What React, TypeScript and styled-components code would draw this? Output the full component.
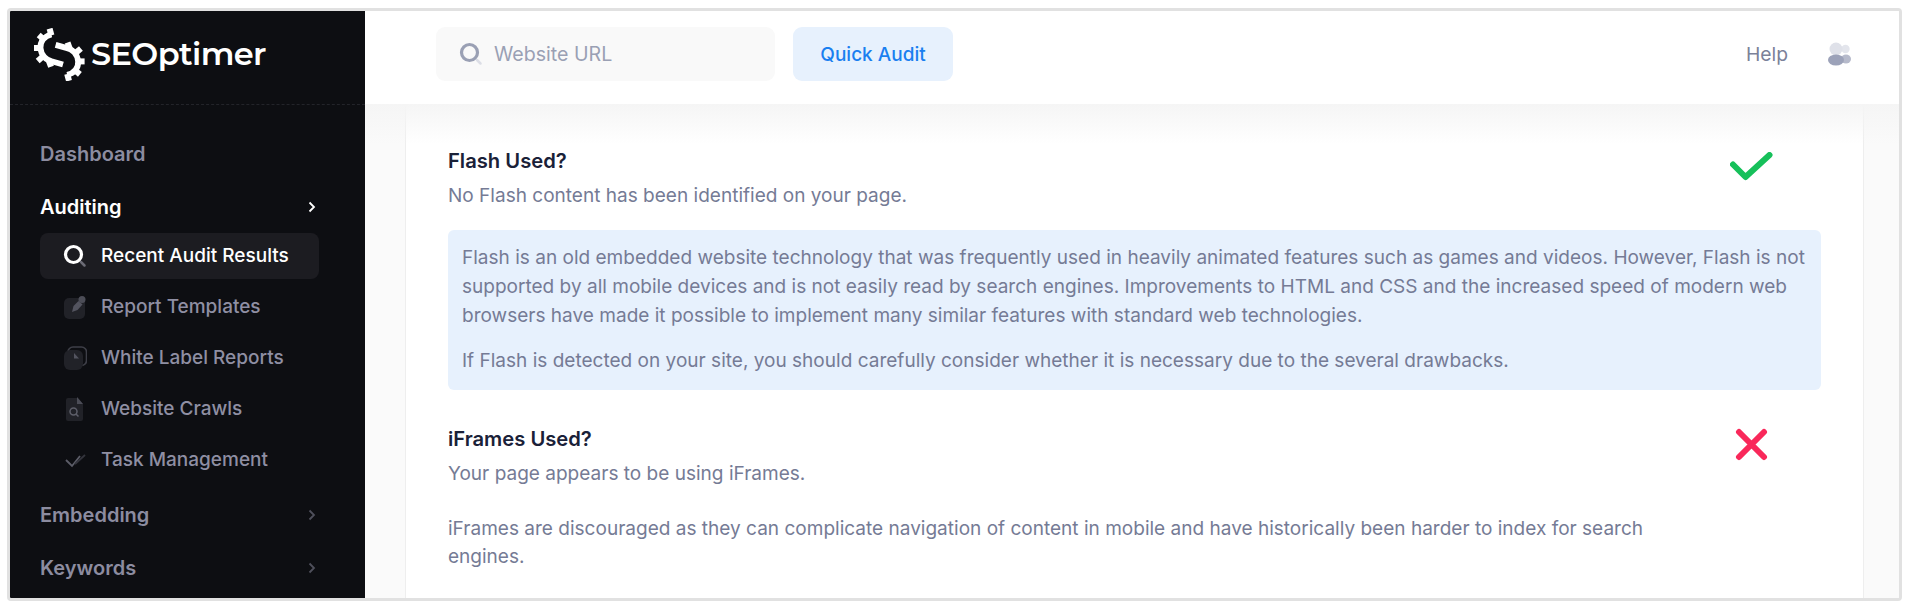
import React from "react";
import styled, { createGlobalStyle } from "styled-components";

const Global = createGlobalStyle`
  html, body { margin: 0; padding: 0; background: #fff; overflow: hidden; }
  * { box-sizing: border-box; }
  body { font-family: Inter, "Liberation Sans", sans-serif; }
`;

const Page = styled.div`
  width: 1910px;
  height: 610px;
  padding: 8px 8px 9px 7px;
  background: #fff;
`;
const Frame = styled.div`
  height: 593px;
  border: 3px solid #e1e1e1;
  border-radius: 4px;
  display: flex;
  overflow: hidden;
`;
const Sidebar = styled.aside`
  width: 355px;
  flex: none;
  background: #0d0e12;
  display: flex;
  flex-direction: column;
`;
const Brand = styled.div`
  height: 94px;
  flex: none;
  padding: 17px 0 0 24px;
  display: flex;
  align-items: flex-start;
  gap: 6px;
  border-bottom: 1px dashed #23242a;
`;
const BrandName = styled.span`
  color: #fff;
  font-family: Montserrat, Inter, sans-serif;
  font-weight: 600;
  font-size: 32px;
  letter-spacing: -0.6px;
  line-height: 38px;
  margin-top: 7px;
`;
const Nav = styled.nav`
  padding: 22px 0 0 30px;
  width: 309px;
  display: flex;
  flex-direction: column;
`;
const Section = styled.div<{ $on?: boolean; $gap?: number }>`
  height: 53px;
  margin-top: ${(p) => p.$gap ?? 0}px;
  display: flex;
  align-items: center;
  justify-content: space-between;
  padding-right: 2px;
  font-size: 20px;
  font-weight: 600;
  color: ${(p) => (p.$on ? "#ffffff" : "#8c8ca0")};
`;
const SubItem = styled.div<{ $on?: boolean }>`
  height: ${(p) => (p.$on ? 46 : 51)}px;
  margin-bottom: ${(p) => (p.$on ? 2 : 0)}px;
  display: flex;
  align-items: center;
  padding: 0 0 ${(p) => (p.$on ? 1 : 0)}px 23px;
  gap: 14px;
  border-radius: 8px;
  font-size: 19px;
  font-weight: 500;
  background: ${(p) => (p.$on ? "#1c1c21" : "transparent")};
  color: ${(p) => (p.$on ? "#ffffff" : "#8f8fa3")};
`;
const Main = styled.div`
  flex: 1;
  min-width: 0;
  display: flex;
  flex-direction: column;
  background: #fafafa;
`;
const Topbar = styled.header`
  height: 93px;
  flex: none;
  background: #fff;
  display: flex;
  align-items: center;
  padding: 0 48px 7px 71px;
`;
const Search = styled.div`
  width: 339px;
  height: 54px;
  border-radius: 9px;
  background: #f9f9f9;
  display: flex;
  align-items: center;
  gap: 11px;
  padding-left: 23px;
  font-size: 19.6px;
  color: #9aa0b4;
`;
const Quick = styled.button`
  margin-left: 18px;
  width: 160px;
  height: 54px;
  border: 0;
  border-radius: 9px;
  background: #e7f1fd;
  color: #1a7ff0;
  font: 500 19px Inter, sans-serif;
`;
const Help = styled.span`
  margin-left: auto;
  font-size: 19.3px;
  color: #7b8199;
`;
const UserIcon = styled.svg`
  margin-left: 40px;
  display: block;
`;
const Content = styled.div`
  flex: 1;
  min-height: 0;
  position: relative;
  padding: 0 35px 0 40px;
  overflow: hidden;
  &::before {
    content: "";
    position: absolute;
    left: 0;
    right: 0;
    top: 0;
    height: 40px;
    background: linear-gradient(#f5f5f5, rgba(245, 245, 245, 0));
    z-index: 1;
  }
`;
const Card = styled.div`
  height: 100%;
  background: #fff;
  border: solid #eeeeee;
  border-width: 0 1px;
  padding: 43px 42px 0;
`;
const Row = styled.div`
  display: flex;
`;
const TextCol = styled.div`
  width: 1237px;
  flex: none;
`;
const IconCol = styled.div<{ $top: number }>`
  flex: 1;
  display: flex;
  justify-content: center;
  align-items: flex-start;
  padding: ${(p) => p.$top}px 4px 0 0;
`;
const Title = styled.h3`
  margin: 0;
  font-size: 20.2px;
  line-height: 28px;
  font-weight: 600;
  color: #1a2138;
`;
const Sub = styled.p`
  margin: 7px 0 0;
  font-size: 19.05px;
  line-height: 28px;
  color: #757b95;
`;
const Para = styled.p`
  margin: 27px 0 0;
  font-size: 19.05px;
  line-height: 28.4px;
  color: #757b95;
`;
const Info = styled.div`
  margin: 20px 0 35px;
  height: 160px;
  padding: 14px 14px 0;
  border-radius: 6px;
  background: #e7f1fd;
  font-size: 19.05px;
  line-height: 28.8px;
  color: #757b95;
  p { margin: 0 0 17px; }
`;

const Chevron = ({ on }: { on?: boolean }) => (
  <svg width="10" height="14" viewBox="0 0 10 14" fill="none" stroke={on ? "#fff" : "#4f505c"} strokeWidth="1.8">
    <path d="M2.500 2.500 7 7l-4.500 4.500" />
  </svg>
);

const GearHalf = () => (
  <>
    <path
      d="M17.500 6.500C10 8 6 14 6.500 20 7 27 12 32.500 18.500 33.500L29 36.500"
      stroke="#fff"
      strokeWidth="5.800"
      fill="none"
    />
    <g fill="#fff">
      <rect x="13.500" y="0.500" width="6" height="7" transform="rotate(-15 16.500 4)" />
      <rect x="4" y="6" width="6" height="6" transform="rotate(40 7 9)" />
      <rect x="0" y="17" width="6" height="6" />
      <rect x="3" y="28" width="6" height="6" transform="rotate(-40 6 31)" />
      <rect x="13" y="33" width="6" height="6" transform="rotate(-20 16 36)" />
    </g>
  </>
);

const Logo = () => (
  <svg width="51" height="53" viewBox="0 0 51 53" fill="none" style={{ flex: "none" }}>
    <GearHalf />
    <g transform="rotate(180 25.300 26.700)">
      <GearHalf />
    </g>
  </svg>
);

const IconBox = styled.svg`
  flex: none;
  display: block;
`;

const SearchDuo = () => (
  <IconBox width="24" height="24" viewBox="0 0 24 24" fill="none">
    <circle cx="10.500" cy="10.500" r="8" stroke="#fff" strokeWidth="3.200" />
    <path d="M18 18l3.500 3.500" stroke="#6b6b75" strokeWidth="2.500" strokeLinecap="round" />
  </IconBox>
);
const PenDuo = () => (
  <IconBox width="24" height="24" viewBox="0 0 24 24">
    <rect x="1" y="3" width="21" height="21" rx="5" fill="#212228" />
    <path d="M9 17l1.500-6 5-5 4 3.500-5 5.500z" fill="#53545f" />
    <circle cx="19" cy="4.500" r="3.500" fill="#4c4d57" />
  </IconBox>
);
const ClockDuo = () => (
  <IconBox width="24" height="24" viewBox="0 0 24 24" fill="none">
    <rect x="5" y="1" width="18.500" height="18.500" rx="5" stroke="#3e3f48" strokeWidth="1.600" />
    <rect x="1" y="4" width="19" height="20" rx="6" fill="#212228" />
    <path d="M11 7l5 5.500h-5z" fill="#53545f" />
  </IconBox>
);
const FileDuo = () => (
  <IconBox width="24" height="24" viewBox="0 0 24 24">
    <path d="M3 3a2 2 0 0 1 2-2h10l5 6v15a2 2 0 0 1-2 2H5a2 2 0 0 1-2-2z" fill="#212228" />
    <path d="M14 0l6 7h-6z" fill="#4c4d57" />
    <circle cx="10.500" cy="14.500" r="3.500" fill="none" stroke="#5e5f6a" strokeWidth="1.500" />
    <path d="M13 17l2.500 2.500" stroke="#5e5f6a" strokeWidth="1.500" />
  </IconBox>
);
const CheckDuo = () => (
  <IconBox width="24" height="24" viewBox="0 0 24 24" fill="none">
    <path d="M3 12l6 6L17 8" stroke="#5c5d68" strokeWidth="1.800" />
    <path d="M12 16l10-9" stroke="#33343c" strokeWidth="1.800" />
  </IconBox>
);

export default function App() {
  return (
    <Page>
      <Global />
      <Frame>
        <Sidebar>
          <Brand>
            <Logo />
            <BrandName>SEOptimer</BrandName>
          </Brand>
          <Nav>
            <Section>Dashboard</Section>
            <Section $on>
              Auditing
              <Chevron on />
            </Section>
            <SubItem $on>
              <SearchDuo />
              Recent Audit Results
            </SubItem>
            <SubItem>
              <PenDuo />
              Report Templates
            </SubItem>
            <SubItem>
              <ClockDuo />
              White Label Reports
            </SubItem>
            <SubItem>
              <FileDuo />
              Website Crawls
            </SubItem>
            <SubItem>
              <CheckDuo />
              Task Management
            </SubItem>
            <Section $gap={3}>
              Embedding
              <Chevron />
            </Section>
            <Section>
              Keywords
              <Chevron />
            </Section>
          </Nav>
        </Sidebar>
        <Main>
          <Topbar>
            <Search>
              <svg width="24" height="24" viewBox="0 0 24 24" fill="none">
                <circle cx="10.500" cy="10.500" r="8" stroke="#9aa0b4" strokeWidth="3.200" />
                <path d="M18 18l3.500 3.500" stroke="#dcdee6" strokeWidth="2.500" strokeLinecap="round" />
              </svg>
              Website URL
            </Search>
            <Quick>Quick Audit</Quick>
            <Help>Help</Help>
            <UserIcon width="23" height="24" viewBox="0 0 23 24">
              <circle cx="17.500" cy="7" r="4.200" fill="#e3e5ec" />
              <ellipse cx="18" cy="17" rx="5" ry="4.500" fill="#b6bacb" />
              <circle cx="8" cy="7" r="6.500" fill="#dfe1e9" />
              <ellipse cx="8" cy="18" rx="8" ry="5.500" fill="#9ca2b9" />
            </UserIcon>
          </Topbar>
          <Content>
            <Card>
              <Row>
                <TextCol>
                  <Title>Flash Used?</Title>
                  <Sub>No Flash content has been identified on your page.</Sub>
                </TextCol>
                <IconCol $top={5}>
                  <svg width="43" height="30" viewBox="0 0 43 30" fill="none">
                    <path d="M3 12.500 15.500 25 39.500 3" stroke="#16c05a" strokeWidth="6" strokeLinecap="round" strokeLinejoin="round" />
                  </svg>
                </IconCol>
              </Row>
              <Info>
                <p>
                  Flash is an old embedded website technology that was frequently used in heavily animated features such as games and videos. However, Flash is not
                  supported by all mobile devices and is not easily read by search engines. Improvements to HTML and CSS and the increased speed of modern web
                  browsers have made it possible to implement many similar features with standard web technologies.
                </p>
                <p>If Flash is detected on your site, you should carefully consider whether it is necessary due to the several drawbacks.</p>
              </Info>
              <Row>
                <TextCol>
                  <Title>iFrames Used?</Title>
                  <Sub>Your page appears to be using iFrames.</Sub>
                  <Para>iFrames are discouraged as they can complicate navigation of content in mobile and have historically been harder to index for search engines.</Para>
                </TextCol>
                <IconCol $top={3}>
                  <svg width="33" height="33" viewBox="0 0 33 33" fill="none">
                    <path d="M4 4l25 25M29 4 4 29" stroke="#f9285a" strokeWidth="6" strokeLinecap="round" />
                  </svg>
                </IconCol>
              </Row>
            </Card>
          </Content>
        </Main>
      </Frame>
    </Page>
  );
}
